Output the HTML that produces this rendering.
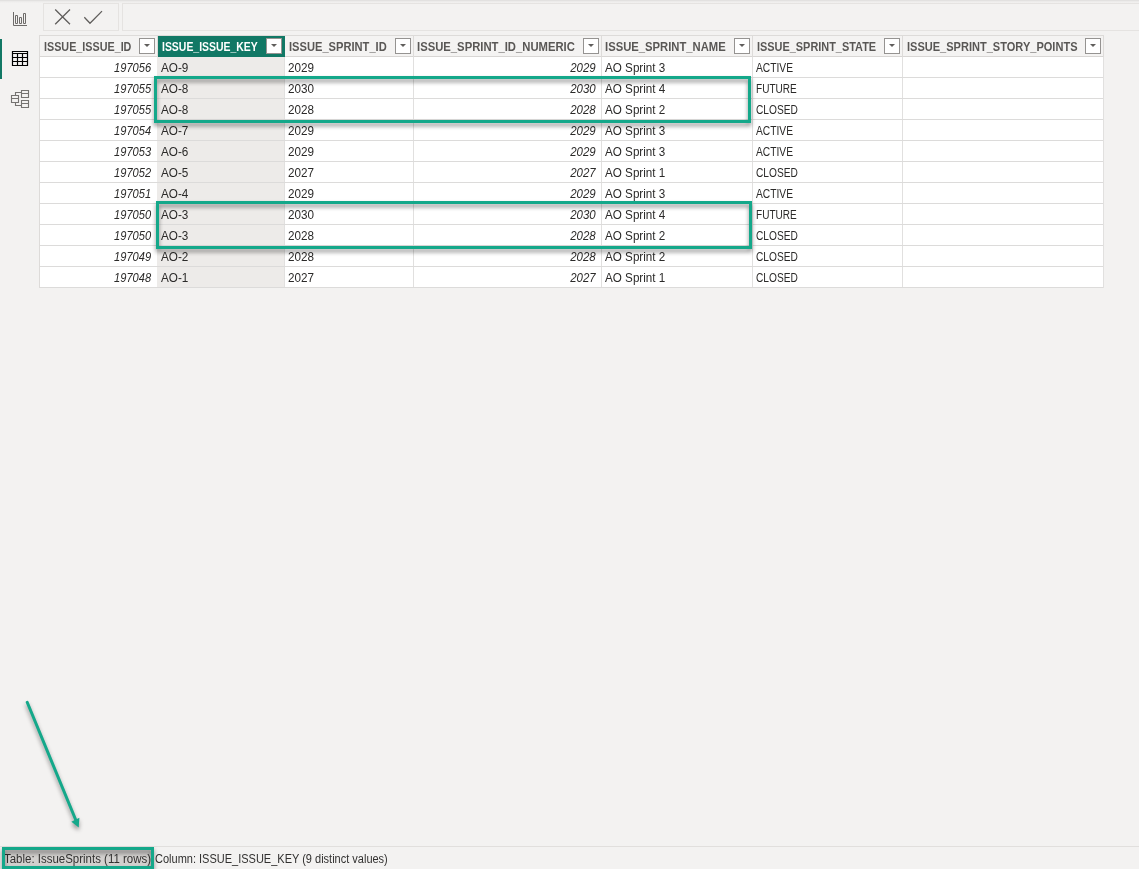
<!DOCTYPE html>
<html><head><meta charset="utf-8"><title>IssueSprints</title>
<style>
html,body{margin:0;padding:0}
body{width:1139px;height:869px;overflow:hidden;background:#f3f2f1;font-family:"Liberation Sans",sans-serif;position:relative;color:#252423}
.abs{position:absolute}
.topline{left:0;top:0;width:1139px;height:3px;background:linear-gradient(#dddcdb,#ecebea 50%,#f3f2f1)}
.fbox{border:1px solid #e5e3e1;box-sizing:border-box}
.grid{left:40px;top:57px;width:1063px;height:231px;background:#fff}
.hrow{left:40px;top:36px;width:1063px;height:20px;background:#f4f3f2}
.hsel{left:158px;top:36px;width:127px;height:21px;background:#117865}
.t{position:absolute;white-space:nowrap;display:inline-block;font-size:12px;line-height:14px}
.ht{top:40px;font-weight:bold;color:#595755;transform-origin:0 50%}
.ht.w{color:#fff}
.dd{top:38px;width:16px;height:16px;box-sizing:border-box;border:1px solid #959391;background:#fff}
.dd:after{content:"";position:absolute;left:4px;top:5px;border-left:3px solid transparent;border-right:3px solid transparent;border-top:3px solid #605e5c}
.vl{top:57px;width:1px;height:231px;background:#e1e0df}
.vh{top:35px;width:1px;height:22px;background:#dddbd9}
.hl{left:40px;width:1063px;height:1px;background:#dcdbda}
.selcol{left:157px;top:57px;width:127px;height:231px;background:#edebe9}
.c{color:#2b2a29}
.l{transform-origin:0 50%}
.r{transform-origin:100% 50%;font-style:italic}
.gbox{border:3px solid #14a88a;box-sizing:border-box;filter:drop-shadow(.7px 3px 2px rgba(0,0,0,.45))}
.sline{left:0;top:846px;width:1139px;height:1px;background:#e1dfdd}
.st{top:852px;color:#323130;transform-origin:0 50%}
</style></head><body>
<div class="abs topline"></div>
<div class="abs" style="left:0;top:39px;width:2px;height:40px;background:#117865"></div>
<svg class="abs" style="left:0;top:0" width="40" height="120" viewBox="0 0 40 120" fill="none">
<g stroke="#6e6c6a" stroke-width="1"><path d="M13.5 12v13.5H27M15.5 15.5h2v8h-2zM19.5 17.5h2v6h-2zM23.5 13.5h2v10h-2z"/></g>
<g stroke="#000" stroke-width="1.200"><path d="M12.500 51.500h15v14h-15zM12.500 53.500h15M12.500 57.500h15M12.500 61.500h15M17.500 53.500v12M22.500 53.500v12"/></g>
<g stroke="#757371" stroke-width="1.100"><path d="M21.500 90.500h7v7h-7zM21.500 93.500h7M11.500 95.500h7v7h-7zM11.500 98.500h7M21.500 100.500h7v7h-7zM21.500 103.500h7M15.500 95.500V92.500H21.500M15.500 102.500V105.500H21.500"/></g>
</svg>
<div class="abs fbox" style="left:43px;top:3px;width:76px;height:28px"></div>
<div class="abs fbox" style="left:122px;top:3px;width:1020px;height:28px"></div>
<svg class="abs" style="left:43px;top:3px" width="76" height="28" viewBox="43 3 76 28" fill="none" stroke="#605e5c" stroke-width="1.300"><path d="M55.200 9.500L70 24.300M70 9.500L55.200 24.300M84.300 17.200L90 23.200L102 11.100"/></svg>
<div class="abs hrow"></div>
<div class="abs grid"></div>
<div class="abs selcol"></div>
<div class="abs hl" style="top:35px;left:39px;width:1065px;background:#dddbd9"></div>
<div class="abs hl" style="top:56px;left:39px;width:1065px;background:#d8d6d4"></div>
<div class="abs vl" style="left:39px;top:35px;height:253px;background:#dddbd9"></div>
<div class="abs vl" style="left:284px"></div><div class="abs vh" style="left:284px"></div>
<div class="abs vl" style="left:413px"></div><div class="abs vh" style="left:413px"></div>
<div class="abs vl" style="left:601px"></div><div class="abs vh" style="left:601px"></div>
<div class="abs vl" style="left:752px"></div><div class="abs vh" style="left:752px"></div>
<div class="abs vl" style="left:902px"></div><div class="abs vh" style="left:902px"></div>
<div class="abs vl" style="left:1103px"></div><div class="abs vh" style="left:1103px"></div>
<div class="abs vh" style="left:157px"></div>
<div class="abs hsel"></div>
<div class="abs hl" style="top:77px"></div>
<div class="abs hl" style="top:98px"></div>
<div class="abs hl" style="top:119px"></div>
<div class="abs hl" style="top:140px"></div>
<div class="abs hl" style="top:161px"></div>
<div class="abs hl" style="top:182px"></div>
<div class="abs hl" style="top:203px"></div>
<div class="abs hl" style="top:224px"></div>
<div class="abs hl" style="top:245px"></div>
<div class="abs hl" style="top:266px"></div>
<div class="abs hl" style="top:287px"></div>
<span class="t ht" id="h0" style="left:43.7px;transform:scaleX(0.8976)">ISSUE_ISSUE_ID</span><span class="abs dd" style="left:139px"></span>
<span class="t ht w" id="h1" style="left:162.0px;transform:scaleX(0.8705)">ISSUE_ISSUE_KEY</span><span class="abs dd" style="left:266px"></span>
<span class="t ht" id="h2" style="left:288.7px;transform:scaleX(0.9272)">ISSUE_SPRINT_ID</span><span class="abs dd" style="left:395px"></span>
<span class="t ht" id="h3" style="left:417.0px;transform:scaleX(0.9396)">ISSUE_SPRINT_ID_NUMERIC</span><span class="abs dd" style="left:583px"></span>
<span class="t ht" id="h4" style="left:605.3px;transform:scaleX(0.9378)">ISSUE_SPRINT_NAME</span><span class="abs dd" style="left:734px"></span>
<span class="t ht" id="h5" style="left:756.6px;transform:scaleX(0.9097)">ISSUE_SPRINT_STATE</span><span class="abs dd" style="left:884px"></span>
<span class="t ht" id="h6" style="left:906.7px;transform:scaleX(0.9197)">ISSUE_SPRINT_STORY_POINTS</span><span class="abs dd" style="left:1085px"></span>
<span class="t c r" style="right:987.9px;top:61px;transform:scaleX(0.9239)">197056</span><span class="t c l" style="left:161.0px;top:61px;transform:scaleX(0.9780)">AO-9</span><span class="t c l" style="left:287.6px;top:61px;transform:scaleX(0.9737)">2029</span><span class="t c r" style="right:543.2px;top:61px;transform:scaleX(0.9549)">2029</span><span class="t c l" style="left:605.3px;top:61px;transform:scaleX(0.9721)">AO Sprint 3</span><span class="t c l" style="left:756.4px;top:61px;transform:scaleX(0.8536)">ACTIVE</span>
<span class="t c r" style="right:987.9px;top:82px;transform:scaleX(0.9239)">197055</span><span class="t c l" style="left:161.0px;top:82px;transform:scaleX(0.9780)">AO-8</span><span class="t c l" style="left:287.6px;top:82px;transform:scaleX(0.9737)">2030</span><span class="t c r" style="right:543.2px;top:82px;transform:scaleX(0.9549)">2030</span><span class="t c l" style="left:605.3px;top:82px;transform:scaleX(0.9721)">AO Sprint 4</span><span class="t c l" style="left:756.4px;top:82px;transform:scaleX(0.8362)">FUTURE</span>
<span class="t c r" style="right:987.9px;top:103px;transform:scaleX(0.9239)">197055</span><span class="t c l" style="left:161.0px;top:103px;transform:scaleX(0.9780)">AO-8</span><span class="t c l" style="left:287.6px;top:103px;transform:scaleX(0.9737)">2028</span><span class="t c r" style="right:543.2px;top:103px;transform:scaleX(0.9549)">2028</span><span class="t c l" style="left:605.3px;top:103px;transform:scaleX(0.9721)">AO Sprint 2</span><span class="t c l" style="left:756.4px;top:103px;transform:scaleX(0.8469)">CLOSED</span>
<span class="t c r" style="right:987.9px;top:124px;transform:scaleX(0.9239)">197054</span><span class="t c l" style="left:161.0px;top:124px;transform:scaleX(0.9780)">AO-7</span><span class="t c l" style="left:287.6px;top:124px;transform:scaleX(0.9737)">2029</span><span class="t c r" style="right:543.2px;top:124px;transform:scaleX(0.9549)">2029</span><span class="t c l" style="left:605.3px;top:124px;transform:scaleX(0.9721)">AO Sprint 3</span><span class="t c l" style="left:756.4px;top:124px;transform:scaleX(0.8536)">ACTIVE</span>
<span class="t c r" style="right:987.9px;top:145px;transform:scaleX(0.9239)">197053</span><span class="t c l" style="left:161.0px;top:145px;transform:scaleX(0.9780)">AO-6</span><span class="t c l" style="left:287.6px;top:145px;transform:scaleX(0.9737)">2029</span><span class="t c r" style="right:543.2px;top:145px;transform:scaleX(0.9549)">2029</span><span class="t c l" style="left:605.3px;top:145px;transform:scaleX(0.9721)">AO Sprint 3</span><span class="t c l" style="left:756.4px;top:145px;transform:scaleX(0.8536)">ACTIVE</span>
<span class="t c r" style="right:987.9px;top:166px;transform:scaleX(0.9239)">197052</span><span class="t c l" style="left:161.0px;top:166px;transform:scaleX(0.9780)">AO-5</span><span class="t c l" style="left:287.6px;top:166px;transform:scaleX(0.9737)">2027</span><span class="t c r" style="right:543.2px;top:166px;transform:scaleX(0.9549)">2027</span><span class="t c l" style="left:605.3px;top:166px;transform:scaleX(0.9721)">AO Sprint 1</span><span class="t c l" style="left:756.4px;top:166px;transform:scaleX(0.8469)">CLOSED</span>
<span class="t c r" style="right:987.9px;top:187px;transform:scaleX(0.9239)">197051</span><span class="t c l" style="left:161.0px;top:187px;transform:scaleX(0.9780)">AO-4</span><span class="t c l" style="left:287.6px;top:187px;transform:scaleX(0.9737)">2029</span><span class="t c r" style="right:543.2px;top:187px;transform:scaleX(0.9549)">2029</span><span class="t c l" style="left:605.3px;top:187px;transform:scaleX(0.9721)">AO Sprint 3</span><span class="t c l" style="left:756.4px;top:187px;transform:scaleX(0.8536)">ACTIVE</span>
<span class="t c r" style="right:987.9px;top:208px;transform:scaleX(0.9239)">197050</span><span class="t c l" style="left:161.0px;top:208px;transform:scaleX(0.9780)">AO-3</span><span class="t c l" style="left:287.6px;top:208px;transform:scaleX(0.9737)">2030</span><span class="t c r" style="right:543.2px;top:208px;transform:scaleX(0.9549)">2030</span><span class="t c l" style="left:605.3px;top:208px;transform:scaleX(0.9721)">AO Sprint 4</span><span class="t c l" style="left:756.4px;top:208px;transform:scaleX(0.8362)">FUTURE</span>
<span class="t c r" style="right:987.9px;top:229px;transform:scaleX(0.9239)">197050</span><span class="t c l" style="left:161.0px;top:229px;transform:scaleX(0.9780)">AO-3</span><span class="t c l" style="left:287.6px;top:229px;transform:scaleX(0.9737)">2028</span><span class="t c r" style="right:543.2px;top:229px;transform:scaleX(0.9549)">2028</span><span class="t c l" style="left:605.3px;top:229px;transform:scaleX(0.9721)">AO Sprint 2</span><span class="t c l" style="left:756.4px;top:229px;transform:scaleX(0.8469)">CLOSED</span>
<span class="t c r" style="right:987.9px;top:250px;transform:scaleX(0.9239)">197049</span><span class="t c l" style="left:161.0px;top:250px;transform:scaleX(0.9780)">AO-2</span><span class="t c l" style="left:287.6px;top:250px;transform:scaleX(0.9737)">2028</span><span class="t c r" style="right:543.2px;top:250px;transform:scaleX(0.9549)">2028</span><span class="t c l" style="left:605.3px;top:250px;transform:scaleX(0.9721)">AO Sprint 2</span><span class="t c l" style="left:756.4px;top:250px;transform:scaleX(0.8469)">CLOSED</span>
<span class="t c r" style="right:987.9px;top:271px;transform:scaleX(0.9239)">197048</span><span class="t c l" style="left:161.0px;top:271px;transform:scaleX(0.9780)">AO-1</span><span class="t c l" style="left:287.6px;top:271px;transform:scaleX(0.9737)">2027</span><span class="t c r" style="right:543.2px;top:271px;transform:scaleX(0.9549)">2027</span><span class="t c l" style="left:605.3px;top:271px;transform:scaleX(0.9721)">AO Sprint 1</span><span class="t c l" style="left:756.4px;top:271px;transform:scaleX(0.8469)">CLOSED</span>
<div class="abs gbox" style="left:154px;top:76px;width:597px;height:47px"></div>
<div class="abs gbox" style="left:156px;top:201px;width:596px;height:48px"></div>
<svg class="abs" style="left:0;top:690px" width="120" height="150" viewBox="0 690 120 150"><g style="filter:drop-shadow(0.5px 3px 2px rgba(0,0,0,.4))"><path d="M27.200 702.300L76.200 821" fill="none" stroke="#14a88a" stroke-width="3" stroke-linecap="round"/><path d="M78.700 827.400L71.400 821.700L79.400 817.800z" fill="#14a88a"/></g></svg>
<div class="abs sline"></div>
<div class="abs" style="left:5px;top:850px;width:146px;height:16px;background:#d2d0ce"></div>
<span class="t st" id="st1" style="left:4.300px;transform:scaleX(0.9555)">Table: IssueSprints (11 rows)</span>
<span class="t st" id="st2" style="left:154.700px;transform:scaleX(0.9169)">Column: ISSUE_ISSUE_KEY (9 distinct values)</span>
<div class="abs gbox" style="left:2px;top:847px;width:152px;height:22px"></div>
</body></html>
